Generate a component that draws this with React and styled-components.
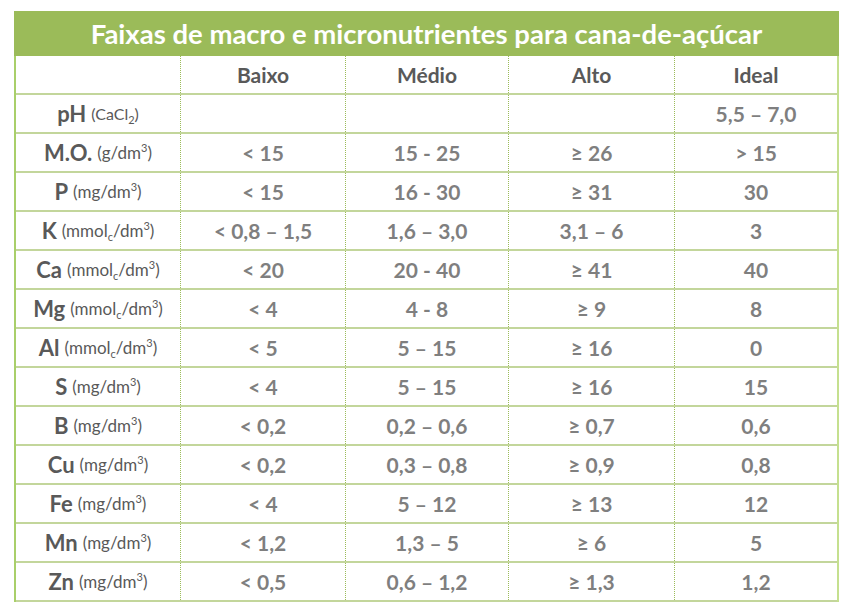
import React from 'react'
import styled, { createGlobalStyle } from 'styled-components'

const GlobalStyle = createGlobalStyle`
  html, body {
    margin: 0;
    padding: 0;
    background: #ffffff;
  }
  body {
    font-family: Lato, "Open Sans", "Liberation Sans", sans-serif;
  }
`

const rows = [
  { name: 'pH', unit: <>(CaCl<sub>2</sub>)</>, small: true, values: ['', '', '', '5,5 – 7,0'] },
  { name: 'M.O.', unit: <>(g/dm<sup>3</sup>)</>, values: ['< 15', '15 - 25', '≥ 26', '> 15'] },
  { name: 'P', unit: <>(mg/dm<sup>3</sup>)</>, values: ['< 15', '16 - 30', '≥ 31', '30'] },
  { name: 'K', unit: <>(mmol<sub>c</sub>/dm<sup>3</sup>)</>, values: ['< 0,8 – 1,5', '1,6 – 3,0', '3,1 – 6', '3'] },
  { name: 'Ca', unit: <>(mmol<sub>c</sub>/dm<sup>3</sup>)</>, values: ['< 20', '20 - 40', '≥ 41', '40'] },
  { name: 'Mg', unit: <>(mmol<sub>c</sub>/dm<sup>3</sup>)</>, values: ['< 4', '4 - 8', '≥ 9', '8'] },
  { name: 'Al', unit: <>(mmol<sub>c</sub>/dm<sup>3</sup>)</>, values: ['< 5', '5 – 15', '≥ 16', '0'] },
  { name: 'S', unit: <>(mg/dm<sup>3</sup>)</>, values: ['< 4', '5 – 15', '≥ 16', '15'] },
  { name: 'B', unit: <>(mg/dm<sup>3</sup>)</>, values: ['< 0,2', '0,2 – 0,6', '≥ 0,7', '0,6'] },
  { name: 'Cu', unit: <>(mg/dm<sup>3</sup>)</>, values: ['< 0,2', '0,3 – 0,8', '≥ 0,9', '0,8'] },
  { name: 'Fe', unit: <>(mg/dm<sup>3</sup>)</>, values: ['< 4', '5 – 12', '≥ 13', '12'] },
  { name: 'Mn', unit: <>(mg/dm<sup>3</sup>)</>, values: ['< 1,2', '1,3 – 5', '≥ 6', '5'] },
  { name: 'Zn', unit: <>(mg/dm<sup>3</sup>)</>, values: ['< 0,5', '0,6 – 1,2', '≥ 1,3', '1,2'] },
]

const heads = ['Baixo', 'Médio', 'Alto', 'Ideal']

const App = () => {
  return (
    <Page>
      <GlobalStyle />
      <Table>
        <Title>Faixas de macro e micronutrientes para cana-de-açúcar</Title>
        <Row>
          <Cell />
          {heads.map(h => (
            <HeadCell key={h}>{h}</HeadCell>
          ))}
        </Row>
        {rows.map(r => (
          <Row key={r.name}>
            <Cell>
              <Name>{r.name}</Name>
              <Unit $small={r.small}>{r.unit}</Unit>
            </Cell>
            {r.values.map((v, i) => (
              <Value key={i}>{v}</Value>
            ))}
          </Row>
        ))}
      </Table>
    </Page>
  )
}

const Page = styled.div`
  width: 851px;
  height: 611px;
  padding: 11px 0 0 14px;
  box-sizing: border-box;
`

const Table = styled.div`
  width: 825px;
  border-left: 2px solid #a9cf6a;
  border-right: 2px solid #c5e08f;
  box-sizing: border-box;
`

const Title = styled.div`
  height: 45px;
  background: #9bbb59;
  color: #ffffff;
  font-weight: 700;
  font-size: 27.5px;
  line-height: 45px;
  text-align: center;
  margin-left: -2px;
  margin-right: -2px;
`

const Row = styled.div`
  display: grid;
  grid-template-columns: 164px 165px 163px 166px 1fr;
  height: 39px;
  border-bottom: 2px solid #c3d69b;
  box-sizing: border-box;
`

const Cell = styled.div`
  display: flex;
  align-items: center;
  justify-content: center;
  gap: 5px;
  color: #595959;
  & + & {
    border-left: 1px dotted #9bbb59;
  }
`

const HeadCell = styled(Cell)`
  font-weight: 700;
  font-size: 21px;
  color: #595959;
`

const Value = styled(Cell)`
  font-weight: 700;
  font-size: 21px;
  color: #7f7f7f;
`

const Name = styled.span`
  font-weight: 700;
  font-size: 22px;
  color: #595959;
`

const Unit = styled.span`
  font-size: ${({ $small }) => ($small ? '16px' : '17px')};
  color: #595959;
  sub, sup {
    font-size: 11px;
    line-height: 0;
  }
`

export default App
